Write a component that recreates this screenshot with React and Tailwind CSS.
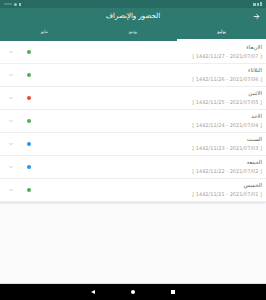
import React from 'react';

const days = [
    { name: 'الاربعاء', hijri: '1442/11/27', date: '2021/07/07', color: 'bg-[#4caf50]' },
    { name: 'الثلاثاء', hijri: '1442/11/26', date: '2021/07/06', color: 'bg-[#4caf50]' },
    { name: 'الاثنين', hijri: '1442/11/25', date: '2021/07/05', color: 'bg-[#f44336]' },
    { name: 'الاحد', hijri: '1442/11/24', date: '2021/07/04', color: 'bg-[#4caf50]' },
    { name: 'السبت', hijri: '1442/11/23', date: '2021/07/03', color: 'bg-[#2196f3]' },
    { name: 'الجمعة', hijri: '1442/11/22', date: '2021/07/02', color: 'bg-[#2196f3]' },
    { name: 'الخميس', hijri: '1442/11/21', date: '2021/07/01', color: 'bg-[#4caf50]' },
];

const App = () => {
    return (
        <div className="w-[266px] h-[300px] flex flex-col bg-[#fafafa] overflow-hidden" style={{ fontFamily: '"DejaVu Sans", "Noto Sans", sans-serif' }}>
            {/* status bar */}
            <div className="h-[8px] bg-[#276a61] flex items-center justify-between px-1">
                <div className="flex items-center gap-[2px]">
                    <div className="w-[8px] h-[2px] bg-[#4a8a81]"></div>
                    <div className="w-[3px] h-[3px] rounded-full bg-[#9cc4be]"></div>
                    <div className="w-[2px] h-[3px] bg-[#9cc4be]"></div>
                </div>
                <div className="flex items-center gap-[1px]">
                    <div className="w-[3px] h-[3px] bg-[#9cc4be]"></div>
                    <div className="w-[2px] h-[3px] bg-[#9cc4be]"></div>
                    <div className="w-[2px] h-[4px] bg-[#9cc4be]"></div>
                </div>
            </div>

            {/* header */}
            <div className="bg-[#2f7a70] text-white">
                <div className="h-[17px] relative flex items-center justify-center">
                    <span className="text-[7px] font-medium leading-none" dir="rtl">الحضور والإنصراف</span>
                    <svg className="absolute right-[6px] top-[5px]" width="7" height="7" viewBox="0 0 24 24" fill="none" stroke="white" strokeWidth="3" strokeLinecap="round" strokeLinejoin="round">
                        <path d="M4 12h16" />
                        <path d="M13 5l7 7-7 7" />
                    </svg>
                </div>
                <div className="h-[16px] flex flex-row-reverse">
                    <div className="flex-1 flex flex-col">
                        <div className="flex-1 flex items-center justify-center pt-[1px] text-[4.5px]" dir="rtl">يوليو</div>
                        <div className="h-[2px] bg-white"></div>
                    </div>
                    <div className="flex-1 flex flex-col">
                        <div className="flex-1 flex items-center justify-center pt-[1px] text-[4.5px] text-[#d6e8e5]" dir="rtl">يونيو</div>
                        <div className="h-[2px]"></div>
                    </div>
                    <div className="flex-1 flex flex-col">
                        <div className="flex-1 flex items-center justify-center pt-[1px] text-[4.5px] text-[#d6e8e5]" dir="rtl">مايو</div>
                        <div className="h-[2px]"></div>
                    </div>
                </div>
            </div>

            {/* list */}
            <div className="bg-white shadow-[0_1px_2px_rgba(0,0,0,0.12)]">
                {days.map((day, index) => (
                    <div key={index} className="h-[23px] flex items-center border-b border-[#eeeeee] pr-[4px] pl-[8px]">
                        <svg width="6" height="6" viewBox="0 0 24 24" fill="none" stroke="#9e9e9e" strokeWidth="2" strokeLinecap="round" strokeLinejoin="round">
                            <path d="M6 9l6 6 6-6" />
                        </svg>
                        <div className={`ml-[13px] w-[4px] h-[4px] rounded-full ${day.color}`}></div>
                        <div className="flex-1 flex flex-col items-end">
                            <span className="text-[5.5px] text-[#5f5f5f] leading-none" dir="rtl">{day.name}</span>
                            <span className="mt-[4px] text-[5px] text-[#a0a0a0] leading-none">[ {day.hijri}  -  {day.date} ]</span>
                        </div>
                    </div>
                ))}
            </div>

            <div className="flex-1"></div>

            {/* nav bar */}
            <div className="h-[1px] bg-[#e0e0e0]"></div>
            <div className="h-[16px] bg-black flex items-center justify-center gap-[36px]">
                <div className="w-0 h-0 border-y-[2.5px] border-y-transparent border-r-[4px] border-r-white"></div>
                <div className="w-[4px] h-[4px] rounded-full bg-white"></div>
                <div className="w-[4px] h-[4px] bg-white"></div>
            </div>
        </div>
    );
};

export default App;
